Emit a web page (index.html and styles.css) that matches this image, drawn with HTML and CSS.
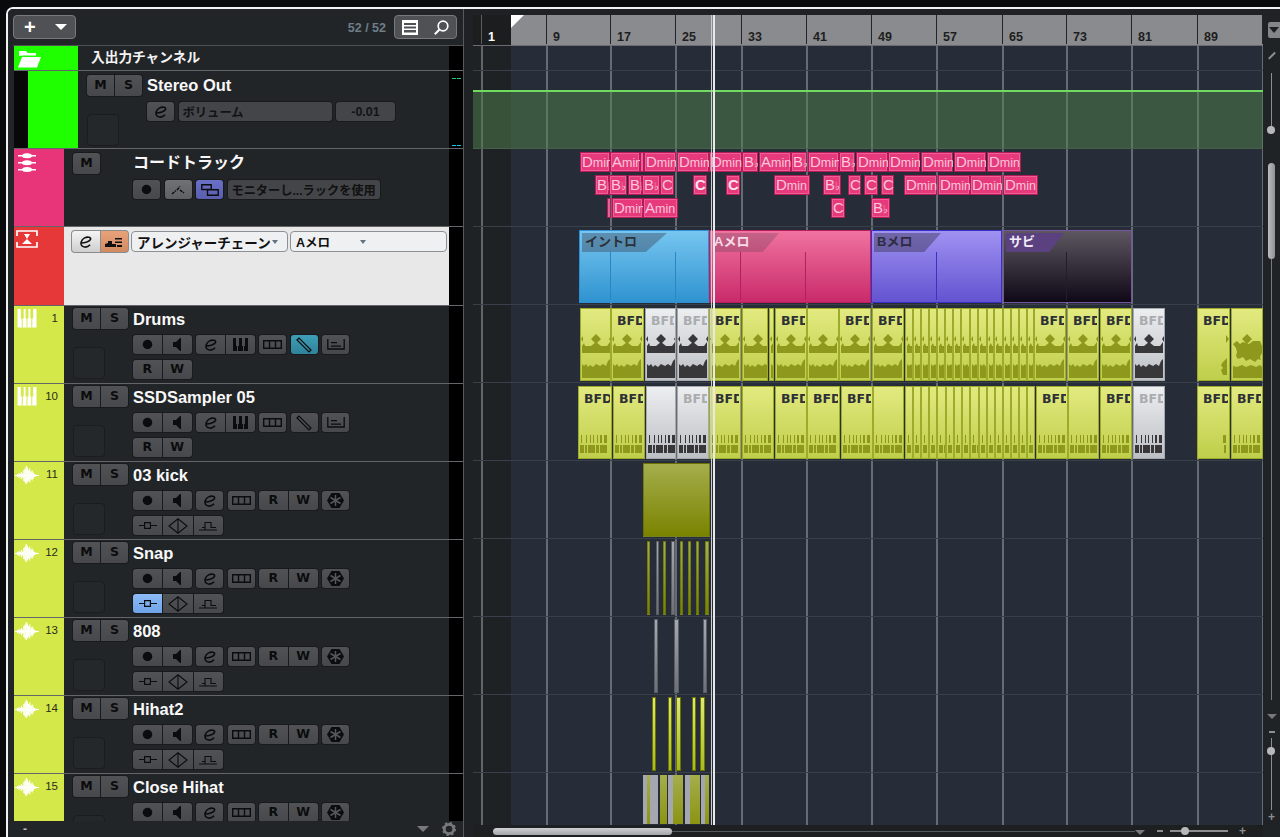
FILE: index.html
```html
<!DOCTYPE html>
<html lang="ja">
<head>
<meta charset="utf-8">
<title>Project</title>
<link rel="stylesheet" href="styles.css">
</head>
<body>
<svg class="defs" aria-hidden="true">
  <symbol id="i-rec" viewBox="0 0 12 12"><circle cx="6" cy="6" r="5.2"/></symbol>
  <symbol id="i-spk" viewBox="0 0 8 13"><path d="M0 4h3l4-4h1v13H7L3 9H0z"/></symbol>
  <symbol id="i-e" viewBox="0 0 14 13"><path d="M2 7.500C6 7.500 12 6 12.500 3.500 13 1 9 .6 6 2 2 4 1 9 3.500 11c2.500 1.600 6 1 8.500-1.500" fill="none" stroke="currentColor" stroke-width="1.700"/></symbol>
  <symbol id="i-keys" viewBox="0 0 15 13"><path d="M0 0h3v8h1v5H0zM5 13V8h1V0h3v8h1v5zM11 13V8h1V0h3v13z"/></symbol>
  <symbol id="i-bars" viewBox="0 0 19 9"><path d="M.7.7h17.600v7.600H.7zM6.500.7v7.600M12.500.7v7.600" fill="none" stroke="currentColor" stroke-width="1.400"/></symbol>
  <symbol id="i-tool" viewBox="0 0 16 16"><path d="M1 3l2-2 12 12-2 2z" fill="none" stroke="currentColor" stroke-width="1.200"/></symbol>
  <symbol id="i-lane" viewBox="0 0 18 11"><path d="M.8 0v10h16.400V0" fill="none" stroke="currentColor" stroke-width="1.300"/><path d="M4 3h6v1.300H4zM4 6.500h10v1.300H4z"/></symbol>
  <symbol id="i-frz" viewBox="0 0 17 15"><path d="M4.500 0h8L17 7.500 12.500 15h-8L0 7.500z"/><path d="M8.500 2v11M3.500 4.500l10 6M13.500 4.500l-10 6" stroke="#55575a" stroke-width="1.500"/></symbol>
  <symbol id="i-a1" viewBox="0 0 18 9"><path d="M0 4.500h5M12 4.500h6" stroke="currentColor" stroke-width="1.200"/><path d="M5.600 1.600h5.800v5.800H5.600z" fill="none" stroke="currentColor" stroke-width="1.200"/></symbol>
  <symbol id="i-a2" viewBox="0 0 20 16"><path d="M10 .8L19 8l-9 7.200L1 8zM10 .8v14.400" fill="none" stroke="currentColor" stroke-width="1.100"/></symbol>
  <symbol id="i-a3" viewBox="0 0 18 10"><path d="M0 9h18M3 6.500h3M6 9V1.500h6V6.500h5" fill="none" stroke="currentColor" stroke-width="1.100"/></symbol>
  <symbol id="i-auto" viewBox="0 0 14 10"><path d="M1 9l4-3.500M6 5l3-3.500M9 5l4 3" fill="none" stroke="currentColor" stroke-width="1.500" stroke-dasharray="3 .8"/></symbol>
  <symbol id="i-link" viewBox="0 0 18 12"><path d="M.8.8h9.400v4.700H.8zM6.500 5.800h10.700v5.400H6.500z" fill="none" stroke="currentColor" stroke-width="1.400"/></symbol>
  <symbol id="i-arr" viewBox="0 0 18 10"><path d="M0 10V7l3-1V4h4v6zM7 10V7h4v3zM10 1h7v1.500h-7zM10 4.500h7V6h-7zM12 8h5v2h-5z"/></symbol>
  <symbol id="t-piano" viewBox="0 0 21 20"><path d="M.5 0h20v19.500H.5z" fill="#fff"/><path d="M5.500 9v10.500M10.500 9v10.500M15.500 9v10.500" stroke="#d5e84a"/><path d="M4 0h3v10H4zM9 0h3v10H9zM14 0h3v10h-3z" fill="#d5e84a"/></symbol>
  <symbol id="t-wave" viewBox="0 0 24 18"><path d="M0 9.500h24" stroke="#fff" stroke-width="1"/><path d="M2.500 8v3M4 7v5M5.200 8v3M6.400 6v7M7.600 7.500v4M8.800 4v11M10 2.500v14M11.200 0v18M12.400 1.500v15M13.600 4v11M14.800 2.500v14M16 5.500v8M17.200 4.500v10M18.400 6.500v6M19.600 8v3M21 8.500v2" stroke="#fff" stroke-width="1.100" fill="none"/></symbol>
  <symbol id="t-folder" viewBox="0 0 23 18"><path d="M1 6V1h7l1.500 2H18v2.500H5z" fill="#fff"/><path d="M4 7h19l-4 10.500H0z" fill="#fff"/></symbol>
  <symbol id="t-chord" viewBox="0 0 18 19"><path d="M0 2h18v1.500H0zM0 9h18v1.500H0zM0 16h18v1.500H0z" fill="#fff"/><ellipse cx="9" cy="2.700" rx="5" ry="2.500" fill="#fff"/><ellipse cx="9" cy="9.700" rx="5" ry="2.500" fill="#fff"/><ellipse cx="9" cy="16.500" rx="5" ry="2.500" fill="#fff"/></symbol>
  <symbol id="t-arr" viewBox="0 0 22 18"><path d="M1 6V1h20v5M1 12v5h20v-5" fill="none" stroke="#fff" stroke-width="1.700"/><path d="M8 4h6l-3 5zM6 14l5-5 5 5z" fill="#fff"/></symbol>
  <symbol id="w-drum" viewBox="0 0 32 73"><path d="M16 26l5 5-5 5-5-5zM1 31l2-3v6zM31 28l-2 3 2 3zM2 38l2-3 1 3h6l5-4 5 4h6l3-4v11H2zM2 56l2 2 2-2 2 3 2-2 3 2 3-3 4 2 3-2 3 2 2-5 2-2v19H2z"/></symbol>
  <symbol id="w-part" viewBox="0 0 32 73"><path d="M29 27l3 4-3 4zM26 54l4-4v17h-4l-2-5 2-2-2-3z"/></symbol>
  <symbol id="w-full" viewBox="0 0 32 73"><path d="M16 26l5 5-5 5-5-5zM2 36l4-3 3 3 3-2 6 2 4-3 7 0 2 5v7l-2 4 1 3-3-1-3 3-5-3-4 2-3-4-5 2-2-3 1-4-1-4zM2 58l4 1 5-2 4 2 5-2 5 2 4-2 2 2v11H2z"/></symbol>
  <symbol id="w-midi" viewBox="0 0 32 73"><path d="M3 49h1v8H3zM8 49h1v8H8zM12 49h1v8h-1zM15 49h1v8h-1zM19 49h1v8h-1zM22 49h2v8h-2zM26 49h3v8h-3zM2 59h4v8H2zM7 59h2v8H7zM10 59h7v8h-7zM18 59h3v8h-3zM22 59h7v8h-7z"/></symbol>
  <symbol id="w-midi2" viewBox="0 0 32 73"><path d="M26 49h3v8h-3zM27 59h2v8h-2z"/></symbol>
</svg>

<div class="window">
  <aside class="tracklist">
    <header class="toolbar">
      <div class="tool-btn add"><span class="plus">+</span><span class="tri"></span></div>
      <span class="count">52 / 52</span>
      <div class="tool-btn view">
        <svg class="list-ic" viewBox="0 0 16 15"><path d="M0 0h16v15H0zM2 3v2h12V3zM2 6.500v2h12v-2zM2 10v2.500h12V10z" fill="#fff" fill-rule="evenodd"/></svg>
        <svg class="find-ic" viewBox="0 0 15 15"><circle cx="9" cy="6" r="4.800" fill="none" stroke="#fff" stroke-width="1.700"/><path d="M5.500 9.500L.8 14.200" stroke="#fff" stroke-width="2"/></svg>
      </div>
    </header>

    <div class="row folder">
      <div class="swatch wide green"><svg class="t-ic t-fold"><use href="#t-folder"/></svg></div>
      <div class="folder-name">入出力チャンネル</div>
      <div class="meter"></div>
    </div>

    <div class="row">
      <div class="swatch wide stereo"><span></span></div>
      <div class="ctrl p4">
        <div class="col-left">
          <div class="group"><div class="b t">M</div><div class="b t">S</div></div>
          <div class="thumb"></div>
        </div>
        <div class="col-right">
          <div class="name">Stereo Out</div>
          <div class="btns">
            <div class="b s"><svg class="ic ic-e"><use href="#i-e"/></svg></div>
            <div class="b field vol">ボリューム</div>
            <div class="b field val">-0.01</div>
          </div>
        </div>
      </div>
      <div class="meter m-out"><i class="top"></i><i class="bot"></i></div>
    </div>

    <div class="row">
      <div class="swatch pink"><svg class="t-ic t-cho"><use href="#t-chord"/></svg></div>
      <div class="ctrl p4">
        <div class="col-left">
          <div class="group one"><div class="b t">M</div></div>
        </div>
        <div class="col-right">
          <div class="name cjk">コードトラック</div>
          <div class="btns">
            <div class="b s"><svg class="ic ic-rec"><use href="#i-rec"/></svg></div>
            <div class="b s lit"><svg class="ic ic-auto"><use href="#i-auto"/></svg></div>
            <div class="b s violet"><svg class="ic ic-link"><use href="#i-link"/></svg></div>
            <div class="b field mon">モニターし...ラックを使用</div>
          </div>
        </div>
      </div>
      <div class="meter"></div>
    </div>

    <div class="row arr">
      <div class="swatch red"><svg class="t-ic t-arr"><use href="#t-arr"/></svg></div>
      <div class="arr-ctrl">
        <div class="group light">
          <div class="lb"><svg class="ic ic-e"><use href="#i-e"/></svg></div>
          <div class="lb orange"><svg class="ic ic-arr"><use href="#i-arr"/></svg></div>
        </div>
        <div class="select first"><span>アレンジャーチェーン</span><i class="sel-tri"></i></div>
        <div class="select second"><span>Aメロ</span><i class="sel-tri"></i></div>
      </div>
      <div class="meter"></div>
    </div>

    <div class="row">
      <div class="swatch lime"><svg class="t-ic t-key"><use href="#t-piano"/></svg><span class="num">1</span></div>
      <div class="ctrl">
        <div class="col-left">
          <div class="group"><div class="b t">M</div><div class="b t">S</div></div>
          <div class="thumb"></div>
        </div>
        <div class="col-right">
          <div class="name">Drums</div>
          <div class="btns">
            <div class="group dbl"><div class="b"><svg class="ic ic-rec"><use href="#i-rec"/></svg></div><div class="b"><svg class="ic ic-spk"><use href="#i-spk"/></svg></div></div>
            <div class="group dbl"><div class="b"><svg class="ic ic-e"><use href="#i-e"/></svg></div><div class="b"><svg class="ic ic-keys"><use href="#i-keys"/></svg></div></div>
            <div class="b s"><svg class="ic ic-bars"><use href="#i-bars"/></svg></div>
            <div class="b s teal"><svg class="ic ic-tool"><use href="#i-tool"/></svg></div>
            <div class="b s"><svg class="ic ic-lane"><use href="#i-lane"/></svg></div>
          </div>
          <div class="btns"><div class="group dbl"><div class="b t">R</div><div class="b t">W</div></div></div>
        </div>
      </div>
      <div class="meter"></div>
    </div>

    <div class="row">
      <div class="swatch lime"><svg class="t-ic t-key"><use href="#t-piano"/></svg><span class="num">10</span></div>
      <div class="ctrl">
        <div class="col-left">
          <div class="group"><div class="b t">M</div><div class="b t">S</div></div>
          <div class="thumb"></div>
        </div>
        <div class="col-right">
          <div class="name">SSDSampler 05</div>
          <div class="btns">
            <div class="group dbl"><div class="b"><svg class="ic ic-rec"><use href="#i-rec"/></svg></div><div class="b"><svg class="ic ic-spk"><use href="#i-spk"/></svg></div></div>
            <div class="group dbl"><div class="b"><svg class="ic ic-e"><use href="#i-e"/></svg></div><div class="b"><svg class="ic ic-keys"><use href="#i-keys"/></svg></div></div>
            <div class="b s"><svg class="ic ic-bars"><use href="#i-bars"/></svg></div>
            <div class="b s"><svg class="ic ic-tool"><use href="#i-tool"/></svg></div>
            <div class="b s"><svg class="ic ic-lane"><use href="#i-lane"/></svg></div>
          </div>
          <div class="btns"><div class="group dbl"><div class="b t">R</div><div class="b t">W</div></div></div>
        </div>
      </div>
      <div class="meter"></div>
    </div>

    <div class="row">
      <div class="swatch lime"><svg class="t-ic t-wav"><use href="#t-wave"/></svg><span class="num">11</span></div>
      <div class="ctrl">
        <div class="col-left">
          <div class="group"><div class="b t">M</div><div class="b t">S</div></div>
          <div class="thumb"></div>
        </div>
        <div class="col-right">
          <div class="name">03 kick</div>
          <div class="btns">
            <div class="group dbl"><div class="b"><svg class="ic ic-rec"><use href="#i-rec"/></svg></div><div class="b"><svg class="ic ic-spk"><use href="#i-spk"/></svg></div></div>
            <div class="b s"><svg class="ic ic-e"><use href="#i-e"/></svg></div>
            <div class="b s"><svg class="ic ic-bars"><use href="#i-bars"/></svg></div>
            <div class="group dbl"><div class="b t">R</div><div class="b t">W</div></div>
            <div class="b s"><svg class="ic ic-frz"><use href="#i-frz"/></svg></div>
          </div>
          <div class="btns"><div class="group tri3"><div class="b"><svg class="ic ic-a1"><use href="#i-a1"/></svg></div><div class="b"><svg class="ic ic-a2"><use href="#i-a2"/></svg></div><div class="b"><svg class="ic ic-a3"><use href="#i-a3"/></svg></div></div></div>
        </div>
      </div>
      <div class="meter"></div>
    </div>

    <div class="row">
      <div class="swatch lime"><svg class="t-ic t-wav"><use href="#t-wave"/></svg><span class="num">12</span></div>
      <div class="ctrl">
        <div class="col-left">
          <div class="group"><div class="b t">M</div><div class="b t">S</div></div>
          <div class="thumb"></div>
        </div>
        <div class="col-right">
          <div class="name">Snap</div>
          <div class="btns">
            <div class="group dbl"><div class="b"><svg class="ic ic-rec"><use href="#i-rec"/></svg></div><div class="b"><svg class="ic ic-spk"><use href="#i-spk"/></svg></div></div>
            <div class="b s"><svg class="ic ic-e"><use href="#i-e"/></svg></div>
            <div class="b s"><svg class="ic ic-bars"><use href="#i-bars"/></svg></div>
            <div class="group dbl"><div class="b t">R</div><div class="b t">W</div></div>
            <div class="b s"><svg class="ic ic-frz"><use href="#i-frz"/></svg></div>
          </div>
          <div class="btns"><div class="group tri3"><div class="b sky"><svg class="ic ic-a1"><use href="#i-a1"/></svg></div><div class="b"><svg class="ic ic-a2"><use href="#i-a2"/></svg></div><div class="b"><svg class="ic ic-a3"><use href="#i-a3"/></svg></div></div></div>
        </div>
      </div>
      <div class="meter"></div>
    </div>

    <div class="row">
      <div class="swatch lime"><svg class="t-ic t-wav"><use href="#t-wave"/></svg><span class="num">13</span></div>
      <div class="ctrl">
        <div class="col-left">
          <div class="group"><div class="b t">M</div><div class="b t">S</div></div>
          <div class="thumb"></div>
        </div>
        <div class="col-right">
          <div class="name">808</div>
          <div class="btns">
            <div class="group dbl"><div class="b"><svg class="ic ic-rec"><use href="#i-rec"/></svg></div><div class="b"><svg class="ic ic-spk"><use href="#i-spk"/></svg></div></div>
            <div class="b s"><svg class="ic ic-e"><use href="#i-e"/></svg></div>
            <div class="b s"><svg class="ic ic-bars"><use href="#i-bars"/></svg></div>
            <div class="group dbl"><div class="b t">R</div><div class="b t">W</div></div>
            <div class="b s"><svg class="ic ic-frz"><use href="#i-frz"/></svg></div>
          </div>
          <div class="btns"><div class="group tri3"><div class="b"><svg class="ic ic-a1"><use href="#i-a1"/></svg></div><div class="b"><svg class="ic ic-a2"><use href="#i-a2"/></svg></div><div class="b"><svg class="ic ic-a3"><use href="#i-a3"/></svg></div></div></div>
        </div>
      </div>
      <div class="meter"></div>
    </div>

    <div class="row">
      <div class="swatch lime"><svg class="t-ic t-wav"><use href="#t-wave"/></svg><span class="num">14</span></div>
      <div class="ctrl">
        <div class="col-left">
          <div class="group"><div class="b t">M</div><div class="b t">S</div></div>
          <div class="thumb"></div>
        </div>
        <div class="col-right">
          <div class="name">Hihat2</div>
          <div class="btns">
            <div class="group dbl"><div class="b"><svg class="ic ic-rec"><use href="#i-rec"/></svg></div><div class="b"><svg class="ic ic-spk"><use href="#i-spk"/></svg></div></div>
            <div class="b s"><svg class="ic ic-e"><use href="#i-e"/></svg></div>
            <div class="b s"><svg class="ic ic-bars"><use href="#i-bars"/></svg></div>
            <div class="group dbl"><div class="b t">R</div><div class="b t">W</div></div>
            <div class="b s"><svg class="ic ic-frz"><use href="#i-frz"/></svg></div>
          </div>
          <div class="btns"><div class="group tri3"><div class="b"><svg class="ic ic-a1"><use href="#i-a1"/></svg></div><div class="b"><svg class="ic ic-a2"><use href="#i-a2"/></svg></div><div class="b"><svg class="ic ic-a3"><use href="#i-a3"/></svg></div></div></div>
        </div>
      </div>
      <div class="meter"></div>
    </div>

    <div class="row last">
      <div class="swatch lime"><svg class="t-ic t-wav"><use href="#t-wave"/></svg><span class="num">15</span></div>
      <div class="ctrl">
        <div class="col-left">
          <div class="group"><div class="b t">M</div><div class="b t">S</div></div>
          <div class="thumb"></div>
        </div>
        <div class="col-right">
          <div class="name">Close Hihat</div>
          <div class="btns">
            <div class="group dbl"><div class="b"><svg class="ic ic-rec"><use href="#i-rec"/></svg></div><div class="b"><svg class="ic ic-spk"><use href="#i-spk"/></svg></div></div>
            <div class="b s"><svg class="ic ic-e"><use href="#i-e"/></svg></div>
            <div class="b s"><svg class="ic ic-bars"><use href="#i-bars"/></svg></div>
            <div class="group dbl"><div class="b t">R</div><div class="b t">W</div></div>
            <div class="b s"><svg class="ic ic-frz"><use href="#i-frz"/></svg></div>
          </div>
        </div>
      </div>
      <div class="meter"></div>
    </div>

    <footer class="list-foot">
      <span class="dash">-</span>
      <span class="foot-tri"></span>
      <svg class="gear" viewBox="0 0 14 14"><circle cx="7" cy="7" r="4.700" fill="none" stroke="#77797c" stroke-width="2.800"/><circle cx="7" cy="7" r="6" fill="none" stroke="#77797c" stroke-width="2" stroke-dasharray="2.300 2.400"/></svg>
    </footer>
  </aside>

  <main class="arrange">
    <div class="project">
      <div class="top-gap"></div>
      <div class="ruler">
        <i class="corner"></i>
        <span class="bar first" style="left:8px">1</span>
        <span class="bar" style="left:73px">9</span>
        <span class="bar" style="left:137px">17</span>
        <span class="bar" style="left:202px">25</span>
        <span class="bar" style="left:268px">33</span>
        <span class="bar" style="left:333px">41</span>
        <span class="bar" style="left:398px">49</span>
        <span class="bar" style="left:463px">57</span>
        <span class="bar" style="left:529px">65</span>
        <span class="bar" style="left:593px">73</span>
        <span class="bar" style="left:658px">81</span>
        <span class="bar" style="left:724px">89</span>
        <span class="bar end" style="left:789px"></span>
      </div>
      <div class="lanes">
        <div class="grid">
          <i style="left:8px"></i><i style="left:73px"></i><i style="left:137px"></i><i style="left:202px"></i><i style="left:268px"></i><i style="left:333px"></i><i style="left:398px"></i><i style="left:463px"></i><i style="left:529px"></i><i style="left:593px"></i><i style="left:658px"></i><i style="left:724px"></i><i style="left:789px"></i>
        </div>

        <div class="lane h25"></div>
        <div class="lane"><div class="auto-band"></div></div>

        <div class="lane">
          <div class="ch r1" style="left:107px;width:30px">D<small>min</small></div>
          <div class="ch r1" style="left:137px;width:30px">A<small>min</small></div>
          <div class="ch r1" style="left:167px;width:4px"></div>
          <div class="ch r1" style="left:171px;width:32px">D<small>min</small></div>
          <div class="ch r1" style="left:204px;width:32px">D<small>min</small></div>
          <div class="ch r1" style="left:236px;width:33px">D<small>min</small></div>
          <div class="ch r1" style="left:269px;width:16px">B<small class="fl">♭</small></div>
          <div class="ch r1" style="left:286px;width:32px">A<small>min</small></div>
          <div class="ch r1" style="left:318px;width:16px">B<small class="fl">♭</small></div>
          <div class="ch r1" style="left:335px;width:31px">D<small>min</small></div>
          <div class="ch r1" style="left:366px;width:16px">B<small class="fl">♭</small></div>
          <div class="ch r1" style="left:383px;width:32px">D<small>min</small></div>
          <div class="ch r1" style="left:415px;width:32px">D<small>min</small></div>
          <div class="ch r1" style="left:448px;width:32px">D<small>min</small></div>
          <div class="ch r1" style="left:481px;width:32px">D<small>min</small></div>
          <div class="ch r1" style="left:514px;width:34px">D<small>min</small></div>

          <div class="ch r2" style="left:122px;width:14px">B<small class="fl">♭</small></div>
          <div class="ch r2" style="left:136px;width:18px">B<small class="fl">♭</small></div>
          <div class="ch r2" style="left:155px;width:14px">B<small class="fl">♭</small></div>
          <div class="ch r2" style="left:169px;width:18px">B<small class="fl">♭</small></div>
          <div class="ch r2" style="left:187px;width:14px">C</div>
          <div class="ch r2 strong" style="left:220px;width:14px">C</div>
          <div class="ch r2 strong" style="left:253px;width:14px">C</div>
          <div class="ch r2" style="left:301px;width:36px">D<small>min</small></div>
          <div class="ch r2" style="left:350px;width:18px">B<small class="fl">♭</small></div>
          <div class="ch r2" style="left:375px;width:13px">C</div>
          <div class="ch r2" style="left:391px;width:14px">C</div>
          <div class="ch r2" style="left:408px;width:13px">C</div>
          <div class="ch r2" style="left:431px;width:33px">D<small>min</small></div>
          <div class="ch r2" style="left:465px;width:32px">D<small>min</small></div>
          <div class="ch r2" style="left:497px;width:32px">D<small>min</small></div>
          <div class="ch r2" style="left:530px;width:35px">D<small>min</small></div>

          <div class="ch r3" style="left:134px;width:4px"></div>
          <div class="ch r3" style="left:139px;width:31px">D<small>min</small></div>
          <div class="ch r3" style="left:170px;width:35px">A<small>min</small></div>
          <div class="ch r3" style="left:358px;width:14px">C</div>
          <div class="ch r3" style="left:398px;width:19px">B<small class="fl">♭</small></div>
        </div>

        <div class="lane">
          <div class="ev intro" style="left:106px;width:130px"><span class="tab">イントロ</span><i style="left:30px"></i><i style="left:95px"></i></div>
          <div class="ev amelo" style="left:236px;width:162px"><span class="tab">Aメロ</span><i style="left:30px"></i><i style="left:95px"></i></div>
          <div class="ev bmelo" style="left:398px;width:131px"><span class="tab">Bメロ</span><i style="left:64px"></i></div>
          <div class="ev sabi" style="left:530px;width:129px"><span class="tab">サビ</span><i style="left:62px"></i></div>
        </div>

        <div class="lane">
          <div class="clip" style="left:107px;width:31px"><svg class="w"><use href="#w-drum"/></svg></div>
          <div class="clip" style="left:138px;width:33px"><b>BFD</b><svg class="w"><use href="#w-drum"/></svg></div>
          <div class="clip g" style="left:172px;width:31px"><b>BFD</b><svg class="w"><use href="#w-drum"/></svg></div>
          <div class="clip g" style="left:204px;width:32px"><b>BFD</b><svg class="w"><use href="#w-drum"/></svg></div>
          <div class="clip" style="left:236px;width:32px"><b>BFD</b><svg class="w"><use href="#w-drum"/></svg></div>
          <div class="clip" style="left:269px;width:26px"><svg class="w"><use href="#w-drum"/></svg></div>
          <div class="clip" style="left:296px;width:5px"><svg class="w"><use href="#w-drum"/></svg></div>
          <div class="clip" style="left:302px;width:32px"><b>BFD</b><svg class="w"><use href="#w-drum"/></svg></div>
          <div class="clip" style="left:334px;width:32px"><svg class="w"><use href="#w-drum"/></svg></div>
          <div class="clip" style="left:366px;width:32px"><b>BFD</b><svg class="w"><use href="#w-drum"/></svg></div>
          <div class="clip" style="left:399px;width:32px"><b>BFD</b><svg class="w"><use href="#w-drum"/></svg></div>
          <div class="clip" style="left:432px;width:8px"><svg class="w"><use href="#w-drum"/></svg></div>
          <div class="clip" style="left:440px;width:8px"><svg class="w"><use href="#w-drum"/></svg></div>
          <div class="clip" style="left:448px;width:8px"><svg class="w"><use href="#w-drum"/></svg></div>
          <div class="clip" style="left:456px;width:8px"><svg class="w"><use href="#w-drum"/></svg></div>
          <div class="clip" style="left:464px;width:8px"><svg class="w"><use href="#w-drum"/></svg></div>
          <div class="clip" style="left:472px;width:8px"><svg class="w"><use href="#w-drum"/></svg></div>
          <div class="clip" style="left:480px;width:8px"><svg class="w"><use href="#w-drum"/></svg></div>
          <div class="clip" style="left:488px;width:9px"><svg class="w"><use href="#w-drum"/></svg></div>
          <div class="clip" style="left:497px;width:8px"><svg class="w"><use href="#w-drum"/></svg></div>
          <div class="clip" style="left:505px;width:9px"><svg class="w"><use href="#w-drum"/></svg></div>
          <div class="clip" style="left:514px;width:7px"><svg class="w"><use href="#w-drum"/></svg></div>
          <div class="clip" style="left:521px;width:9px"><svg class="w"><use href="#w-drum"/></svg></div>
          <div class="clip" style="left:530px;width:8px"><svg class="w"><use href="#w-drum"/></svg></div>
          <div class="clip" style="left:538px;width:8px"><svg class="w"><use href="#w-drum"/></svg></div>
          <div class="clip" style="left:546px;width:8px"><svg class="w"><use href="#w-drum"/></svg></div>
          <div class="clip" style="left:554px;width:7px"><svg class="w"><use href="#w-drum"/></svg></div>
          <div class="clip" style="left:561px;width:32px"><b>BFD</b><svg class="w"><use href="#w-drum"/></svg></div>
          <div class="clip" style="left:594px;width:32px"><b>BFD</b><svg class="w"><use href="#w-drum"/></svg></div>
          <div class="clip" style="left:627px;width:32px"><b>BFD</b><svg class="w"><use href="#w-drum"/></svg></div>
          <div class="clip g" style="left:660px;width:32px"><b>BFD</b><svg class="w"><use href="#w-drum"/></svg></div>
          <div class="clip" style="left:724px;width:33px"><b>BFD</b><svg class="w"><use href="#w-part"/></svg></div>
          <div class="clip" style="left:758px;width:32px"><svg class="w"><use href="#w-full"/></svg></div>
        </div>

        <div class="lane">
          <div class="clip" style="left:105px;width:34px"><b>BFD</b><svg class="w"><use href="#w-midi"/></svg></div>
          <div class="clip" style="left:140px;width:32px"><b>BFD</b><svg class="w"><use href="#w-midi"/></svg></div>
          <div class="clip g" style="left:173px;width:30px"><svg class="w"><use href="#w-midi"/></svg></div>
          <div class="clip g" style="left:204px;width:32px"><b>BFD</b><svg class="w"><use href="#w-midi"/></svg></div>
          <div class="clip" style="left:236px;width:32px"><b>BFD</b><svg class="w"><use href="#w-midi"/></svg></div>
          <div class="clip" style="left:269px;width:32px"><svg class="w"><use href="#w-midi"/></svg></div>
          <div class="clip" style="left:302px;width:32px"><b>BFD</b><svg class="w"><use href="#w-midi"/></svg></div>
          <div class="clip" style="left:334px;width:33px"><b>BFD</b><svg class="w"><use href="#w-midi"/></svg></div>
          <div class="clip" style="left:368px;width:32px"><b>BFD</b><svg class="w"><use href="#w-midi"/></svg></div>
          <div class="clip" style="left:400px;width:31px"><svg class="w"><use href="#w-midi"/></svg></div>
          <div class="clip" style="left:432px;width:8px"><svg class="w"><use href="#w-midi"/></svg></div>
          <div class="clip" style="left:440px;width:8px"><svg class="w"><use href="#w-midi"/></svg></div>
          <div class="clip" style="left:448px;width:8px"><svg class="w"><use href="#w-midi"/></svg></div>
          <div class="clip" style="left:456px;width:8px"><svg class="w"><use href="#w-midi"/></svg></div>
          <div class="clip" style="left:464px;width:9px"><svg class="w"><use href="#w-midi"/></svg></div>
          <div class="clip" style="left:473px;width:8px"><svg class="w"><use href="#w-midi"/></svg></div>
          <div class="clip" style="left:481px;width:8px"><svg class="w"><use href="#w-midi"/></svg></div>
          <div class="clip" style="left:489px;width:8px"><svg class="w"><use href="#w-midi"/></svg></div>
          <div class="clip" style="left:497px;width:9px"><svg class="w"><use href="#w-midi"/></svg></div>
          <div class="clip" style="left:506px;width:8px"><svg class="w"><use href="#w-midi"/></svg></div>
          <div class="clip" style="left:514px;width:8px"><svg class="w"><use href="#w-midi"/></svg></div>
          <div class="clip" style="left:522px;width:8px"><svg class="w"><use href="#w-midi"/></svg></div>
          <div class="clip" style="left:530px;width:8px"><svg class="w"><use href="#w-midi"/></svg></div>
          <div class="clip" style="left:538px;width:8px"><svg class="w"><use href="#w-midi"/></svg></div>
          <div class="clip" style="left:546px;width:8px"><svg class="w"><use href="#w-midi"/></svg></div>
          <div class="clip" style="left:554px;width:8px"><svg class="w"><use href="#w-midi"/></svg></div>
          <div class="clip" style="left:563px;width:32px"><b>BFD</b><svg class="w"><use href="#w-midi"/></svg></div>
          <div class="clip" style="left:595px;width:31px"><svg class="w"><use href="#w-midi"/></svg></div>
          <div class="clip" style="left:627px;width:32px"><b>BFD</b><svg class="w"><use href="#w-midi"/></svg></div>
          <div class="clip g" style="left:660px;width:32px"><b>BFD</b><svg class="w"><use href="#w-midi"/></svg></div>
          <div class="clip" style="left:724px;width:33px"><b>BFD</b><svg class="w"><use href="#w-midi2"/></svg></div>
          <div class="clip" style="left:758px;width:32px"><b>BFD</b><svg class="w"><use href="#w-midi"/></svg></div>
        </div>

        <div class="lane"><div class="audio olive" style="left:170px;width:67px"></div></div>

        <div class="lane">
          <div class="audio olive" style="left:174px;width:3px"></div>
          <div class="audio grey" style="left:183px;width:3px"></div>
          <div class="audio olive" style="left:190px;width:3px"></div>
          <div class="audio grey" style="left:198px;width:4px"></div>
          <div class="audio olive" style="left:207px;width:3px"></div>
          <div class="audio olive" style="left:215px;width:3px"></div>
          <div class="audio olive" style="left:223px;width:3px"></div>
          <div class="audio olive" style="left:232px;width:4px"></div>
        </div>

        <div class="lane">
          <div class="audio grey" style="left:181px;width:4px"></div>
          <div class="audio grey" style="left:201px;width:5px"></div>
          <div class="audio grey" style="left:230px;width:4px"></div>
        </div>

        <div class="lane">
          <div class="audio bright" style="left:179px;width:4px"></div>
          <div class="audio bright" style="left:195px;width:4px"></div>
          <div class="audio bright" style="left:203px;width:5px"></div>
          <div class="audio bright" style="left:219px;width:4px"></div>
          <div class="audio bright" style="left:227px;width:5px"></div>
        </div>

        <div class="lane">
          <div class="audio olive short" style="left:170px;width:15px"></div>
          <div class="audio grey short" style="left:170px;width:4px"></div>
          <div class="audio grey short" style="left:177px;width:8px"></div>
          <div class="audio olive short" style="left:187px;width:7px"></div>
          <div class="audio olive short" style="left:195px;width:15px"></div>
          <div class="audio grey short" style="left:195px;width:5px"></div>
          <div class="audio olive short" style="left:212px;width:15px"></div>
          <div class="audio grey short" style="left:212px;width:5px"></div>
          <div class="audio olive short" style="left:228px;width:8px"></div>
          <div class="audio grey short" style="left:228px;width:4px"></div>
        </div>

        <div class="play p1"></div>
        <div class="play p2"></div>
      </div>
      <div class="hbar">
        <div class="scroll"><span class="scroll-thumb"></span></div>
        <span class="foot-tri small"></span>
        <span class="minus"></span>
        <div class="h-zoom"><span class="knob"></span></div>
        <span class="zoom-plus">+</span>
      </div>
    </div>

    <div class="vbar">
      <span class="v-btn"><i></i></span>
      <span class="slash"></span>
      <div class="v-slider top"><span class="knob"></span></div>
      <div class="v-scroll"><span class="v-thumb"></span></div>
      <span class="foot-tri v"></span>
      <span class="minus v"></span>
      <div class="v-slider zoom"><span class="knob"></span></div>
      <span class="zoom-plus v">+</span>
    </div>
  </main>
</div>
</body>
</html>
```

FILE: styles.css
```css
* { box-sizing: border-box; }
html, body { margin: 0; height: 837px; overflow: hidden; background: #090a0b; }
body { font-family: "Liberation Sans", "Noto Sans CJK JP", sans-serif; color: #fff; }
.defs { position: absolute; width: 0; height: 0; }
svg { display: block; fill: currentColor; }

.window {
  display: flex;
  height: 830px;
  margin: 7px 0 0 6px;
  border-top: 2px solid #f2f2f2;
  border-left: 2px solid #f2f2f2;
  border-top-left-radius: 7px;
  background: #212428;
  overflow: hidden;
}

/* track list */
.tracklist {
  width: 456px;
  height: 828px;
  padding-left: 6px;
  border-right: 1px solid #56585a;
  display: flex;
  flex-direction: column;
  flex: none;
  background: #222528;
}
.toolbar {
  height: 37px;
  flex: none;
  padding: 6px 6px 0 0;
  margin-left: -1px;
  display: flex;
  align-items: flex-start;
  border-bottom: 1px solid #4f5154;
}
.tool-btn {
  height: 24px;
  width: 63px;
  background: #4f5154;
  border: 1px solid #77797c;
  border-radius: 4px;
  display: flex;
  align-items: center;
}
.add { justify-content: space-between; padding: 0 8px 0 10px; }
.plus { font-size: 20px; font-weight: 700; line-height: 20px; }
.tri { width: 0; height: 0; border: 6px solid transparent; border-top: 6px solid #fff; border-bottom: 0; }
.count { margin: 6px 8px 0 auto; font-size: 12.500px; font-weight: 700; color: #6f7d88; }
.view { justify-content: space-between; padding: 0 7px; }
.list-ic { width: 16px; height: 15px; }
.find-ic { width: 15px; height: 15px; }

.row {
  height: 78px;
  flex: none;
  display: flex;
  border-bottom: 1px solid #636568;
  overflow: hidden;
}
.row.folder { height: 25px; }
.row.arr { height: 79px; }
.row.last { height: 47px; border-bottom: 0; }

.swatch { width: 50px; flex: none; position: relative; }
.swatch.wide { width: 64px; }
.green { background: #20ff00; }
.stereo { background: #20ff00; }
.stereo span { display: block; width: 14px; height: 100%; background: #080808; }
.pink { background: #e8357a; }
.red { background: #e63838; }
.lime { background: #d5e84a; }
.t-ic { position: absolute; }
.t-fold { left: 4px; top: 4px; width: 23px; height: 18px; }
.t-cho { left: 4px; top: 4px; width: 18px; height: 19px; }
.t-arr { left: 2px; top: 3px; width: 22px; height: 18px; }
.t-key { left: 3px; top: 3px; width: 20px; height: 19px; }
.t-wav { left: 1px; top: 4px; width: 24px; height: 18px; }
.num { position: absolute; right: 6px; top: 5px; font-size: 11.500px; line-height: 14px; color: #2a2c20; }

.folder-name { flex: 1; padding: 2px 0 0 13px; font-size: 13.700px; font-weight: 700; line-height: 20px; color: #f4f4f4; }
.meter { width: 14px; flex: none; background: #000; position: relative; }
.m-out i { position: absolute; left: 3px; width: 9px; height: 1px; background: repeating-linear-gradient(90deg, #19d27a 0 4px, transparent 4px 5px); }
.m-out .top { top: 7px; }
.m-out .bot { bottom: 2px; background: repeating-linear-gradient(90deg, #18c8e8 0 4px, transparent 4px 5px); }

.ctrl {
  flex: 1;
  min-width: 0;
  padding: 2px 0 0 9px;
  display: grid;
  grid-template-columns: 55px 1fr;
  column-gap: 5px;
}
.ctrl.p4 { padding-top: 4px; }
.col-left { height: 71px; display: flex; flex-direction: column; justify-content: space-between; align-items: flex-start; }
.col-right { min-width: 0; }
.name { height: 21px; font-size: 16.500px; font-weight: 700; line-height: 23px; color: #f8f8f8; margin-bottom: 6px; white-space: nowrap; }
.p4 .name { line-height: 21px; }
.p4 .name.cjk { font-size: 16px; line-height: 19px; }
.btns { display: flex; gap: 4.500px; height: 19px; margin-bottom: 6px; }

.b {
  flex: 1;
  height: 100%;
  display: flex;
  align-items: center;
  justify-content: center;
  background: linear-gradient(#505255, #46484b);
  color: #0b0c0d;
}
.b.s { flex: none; width: 27px; border-radius: 3px; box-shadow: 0 0 0 1px #191a1c; }
.b.t { font: 700 12.500px/1 "DejaVu Sans", sans-serif; }
.group { display: flex; width: 55px; height: 21px; border-radius: 3px; overflow: hidden; gap: 1px; background: #191a1c; box-shadow: 0 0 0 1px #191a1c; }
.group.one { width: 27px; }
.group.dbl { width: 58.500px; height: 19px; flex: none; }
.group.tri3 { width: 90px; height: 19px; flex: none; }
.thumb { width: 32px; height: 32px; background: #25282b; border: 1px solid #1a1c1e; border-radius: 4px; }

.field { flex: none; border-radius: 3px; box-shadow: 0 0 0 1px #191a1c; font-weight: 700; white-space: nowrap; font-size: 12.300px; color: #121314; background: #434548; }
.vol { width: 153px; justify-content: flex-start; padding-left: 4px; }
.val { width: 59px; font-size: 12.500px; }
.mon { width: 152px; justify-content: flex-start; padding-left: 4px; font-size: 12.200px; color: #111; }
.lit { background: linear-gradient(#707275, #5e6063); }
.violet { background: linear-gradient(#6a70c8, #5a5eae); }
.teal { background: linear-gradient(#3f9fb8, #2f8299); }
.sky { background: linear-gradient(#8dbcf6, #6fa3e8); }

.ic-rec { width: 11px; height: 11px; }
.ic-spk { width: 8px; height: 13px; }
.ic-e { width: 13px; height: 12px; }
.ic-keys { width: 15px; height: 13px; }
.ic-bars { width: 19px; height: 9px; }
.ic-tool { width: 16px; height: 16px; }
.ic-lane { width: 18px; height: 11px; }
.ic-frz { width: 17px; height: 15px; }
.ic-a1 { width: 18px; height: 9px; }
.ic-a2 { width: 20px; height: 16px; }
.ic-a3 { width: 18px; height: 10px; }
.ic-auto { width: 14px; height: 10px; }
.ic-link { width: 18px; height: 12px; }
.ic-arr { width: 18px; height: 10px; }

.arr-ctrl { flex: 1; background: #e8e8e8; display: flex; padding: 4px 0 0 8px; gap: 3px; align-items: flex-start; color: #111; }
.group.light { width: 56px; height: 21px; background: #8a8c8e; box-shadow: 0 0 0 1px #8a8c8e; }
.lb { flex: 1; display: flex; align-items: center; justify-content: center; background: linear-gradient(#f4f4f4, #cfcfcf); color: #111; }
.lb.orange { background: linear-gradient(#e8a27a, #d28a60); }
.select {
  height: 21px;
  width: 157px;
  flex: none;
  position: relative;
  display: flex;
  align-items: center;
  padding-left: 5px;
  border: 1px solid #8d9196;
  border-radius: 4px;
  background: #eef0f2;
  font-weight: 700;
  white-space: nowrap;
  overflow: hidden;
}
.select.first { font-size: 13.500px; }
.select.second { font-size: 12.500px; margin-left: -1px; }
.sel-tri { position: absolute; top: 8px; width: 0; height: 0; border: 3.500px solid transparent; border-top: 4px solid #5f7282; border-bottom: 0; }
.first .sel-tri { left: 140px; }
.second .sel-tri { left: 69px; }

.list-foot { flex: 1; display: flex; align-items: center; padding: 0 7px 0 9px; position: relative; }
.dash { font-size: 12px; font-weight: 700; color: #bbb; }
.foot-tri { width: 0; height: 0; border: 6px solid transparent; border-top: 6px solid #77797c; border-bottom: 0; }
.list-foot .foot-tri { margin: 0 13px 0 auto; }
.gear { width: 14px; height: 14px; }

/* arrange window */
.arrange { flex: 1; min-width: 0; display: flex; padding-left: 9px; background: #1f2225; }
.project { width: 790px; flex: none; display: flex; flex-direction: column; }
.top-gap { height: 6px; flex: none; }
.ruler {
  height: 31px;
  flex: none;
  position: relative;
  background: linear-gradient(90deg, #1c1d1f 38px, #8a8b8e 38px);
  border-bottom: 1px solid #6a6c70;
}
.corner { position: absolute; left: 38px; top: 0; width: 0; height: 0; border-style: solid; border-width: 13px 13px 0 0; border-color: #fff transparent transparent transparent; }
.bar { position: absolute; top: 0; height: 29px; padding: 15px 0 0 6px; border-left: 1.500px solid #232427; font-size: 12.500px; font-weight: 700; line-height: 14px; color: #1d1e20; }
.bar.first { color: #fff; border-left-color: #5c5e60; }

.lanes { height: 779px; flex: none; position: relative; background: linear-gradient(90deg, #1f2224 38px, #262d38 38px); }
.grid i { position: absolute; top: 0; bottom: 0; width: 1.500px; background: rgba(255, 255, 255, .3); }
.lane { height: 78px; position: relative; border-bottom: 1px solid #3a404a; }
.lane.h25 { height: 25px; }
.auto-band { position: absolute; left: 0; right: 0; top: 19px; bottom: -1px; background: rgba(80, 129, 76, .5); border-top: 2px solid #6fdc5f; }

.ch {
  position: absolute;
  height: 20px;
  padding-left: 2px;
  overflow: hidden;
  white-space: nowrap;
  background: #e63a7c;
  box-shadow: inset 0 0 0 1px #b51a58, inset 0 0 0 2px #ee5f94;
  font-size: 15px;
  line-height: 20px;
  color: #fbc6da;
}
.ch small { font-size: 12.500px; }
.ch .fl { font-family: "DejaVu Sans", sans-serif; font-size: 11px; }
.ch.strong { font-weight: 700; color: #fde3ec; }
.r1 { top: 3px; }
.r2 { top: 26px; }
.r3 { top: 49px; }

.ev { position: absolute; top: 3px; height: 73px; border: 1.500px solid; overflow: hidden; }
.ev i { position: absolute; top: 21px; bottom: 2px; width: 1px; }
.tab {
  position: absolute;
  left: 2px;
  top: 2px;
  height: 19px;
  width: 85px;
  padding-left: 3px;
  font-size: 13px;
  font-weight: 700;
  line-height: 18px;
  white-space: nowrap;
  clip-path: polygon(0 0, 100% 0, 75% 100%, 0 100%);
}
.intro { background: linear-gradient(#76c6f0, #2f93d0); border-color: #2e8fd2; }
.intro .tab { background: rgba(60, 70, 90, .42); color: #2b3138; }
.intro i { background: #2a86c2; }
.amelo { background: linear-gradient(#f0739f, #c92a6a); border-color: #b81e5e; }
.amelo .tab { left: 4px; width: 65px; padding-left: 0; background: rgba(70, 50, 70, .25); color: #f8dbe6; }
.amelo i { background: #b02160; }
.bmelo { background: linear-gradient(#9f92f2, #6353d0); border-color: #3b30c2; }
.bmelo .tab { width: 67px; background: rgba(50, 45, 70, .42); color: #2d2c40; }
.bmelo i { background: #3c30c8; }
.sabi { background: linear-gradient(#5c5760, #0f0817); border-color: #76559e; }
.sabi .tab { width: 58px; background: #5b4180; color: #f1ecf5; }
.sabi i { background: #241d2a; }

.clip {
  position: absolute;
  top: 3px;
  height: 73px;
  overflow: hidden;
  background: linear-gradient(#e2ea80, #bfce4a);
  border: 1px solid #9eaa2a;
  color: #8d981c;
}
.clip b { display: block; margin: 5px 1px 0 5px; overflow: hidden; white-space: nowrap; font: 700 12.500px/14px "DejaVu Sans", sans-serif; color: #2d3136; position: relative; }
.clip .w { position: absolute; left: -1px; top: -1px; width: 32px; height: 73px; }
.clip.g { background: linear-gradient(#eceef0, #bcbfc4); border-color: #a5a8ac; color: #38383a; }
.clip.g b { color: #aaacaf; }

.audio { position: absolute; top: 2px; height: 74px; border: 1px solid rgba(90, 100, 0, .6); }
.audio.short { top: 2px; height: 49px; border: 0; }
.olive { background: linear-gradient(#a5ae4c, #7a8300); }
.grey { background: linear-gradient(#a5a8ae, #6d7076); border-color: #5a5d62; }
.audio.short.grey { background: #a4a7b0; }
.audio.short.olive { background: linear-gradient(#a5ae4c, #8b9412); }
.bright { background: linear-gradient(#dfe878, #a9b820); border-color: #6a7400; }

.play { position: absolute; top: -31px; bottom: 0; z-index: 3; background: #e8e8e8; }
.p1 { left: 237.500px; width: 1.500px; background: #c9cccf; }
.p2 { left: 240px; width: 2px; }

.hbar { flex: 1; display: flex; align-items: center; height: 12px; padding-left: 20px; background: #1d1f21; position: relative; }
.scroll { width: 642px; height: 1px; background: #55585c; position: relative; }
.scroll-thumb { position: absolute; left: 0; top: -3px; width: 179px; height: 7px; border-radius: 4px; background: linear-gradient(#cfd0d2, #a3a5a8); }
.foot-tri.small { border-width: 5px 5px 0; margin-top: 3px; }
.minus { width: 6px; height: 1.500px; margin-left: 12px; background: #8c8e90; }
.h-zoom { width: 58px; height: 1.500px; margin-left: 7px; background: #8c8e90; position: relative; }
.knob { position: absolute; width: 8px; height: 8px; border-radius: 50%; background: #b6b8ba; }
.h-zoom .knob { left: 11px; top: -3px; }
.zoom-plus { margin-left: 11px; font-size: 12px; line-height: 12px; font-weight: 700; color: #8c8e90; }

.vbar { width: 17px; flex: none; display: flex; flex-direction: column; align-items: center; padding: 13px 0 0 0; background: #202326; position: relative; }
.v-btn { width: 12px; height: 16px; margin-left: 5px; background: #838588; display: flex; align-items: center; justify-content: center; border-radius: 2px 0 0 2px; }
.v-btn i { width: 0; height: 0; border: 5px solid transparent; border-top: 6px solid #1c1e20; border-bottom: 0; }
.slash { width: 1.500px; height: 9px; margin: 13px 0 0 1px; background: #8c8e90; transform: rotate(45deg); }
.v-slider { width: 1.500px; background: #8c8e90; position: relative; }
.v-slider .knob { left: -3.500px; }
.v-slider.top { height: 57px; margin-top: 13px; }
.v-slider.top .knob { bottom: -4px; }
.v-scroll { width: 1.500px; height: 537px; margin-top: 33px; background: #77797c; position: relative; }
.v-thumb { position: absolute; left: -3px; top: 0; width: 7px; height: 96px; border-radius: 4px; background: linear-gradient(90deg, #b9bbbd, #8f9193); }
.foot-tri.v { border-width: 5px 5px 0; margin-top: 14px; }
.minus.v { margin: 12px 0 0; }
.v-slider.zoom { height: 72px; margin-top: 5.500px; }
.v-slider.zoom .knob { top: 9px; }
.zoom-plus.v { margin: 1px 0 0; }
```
